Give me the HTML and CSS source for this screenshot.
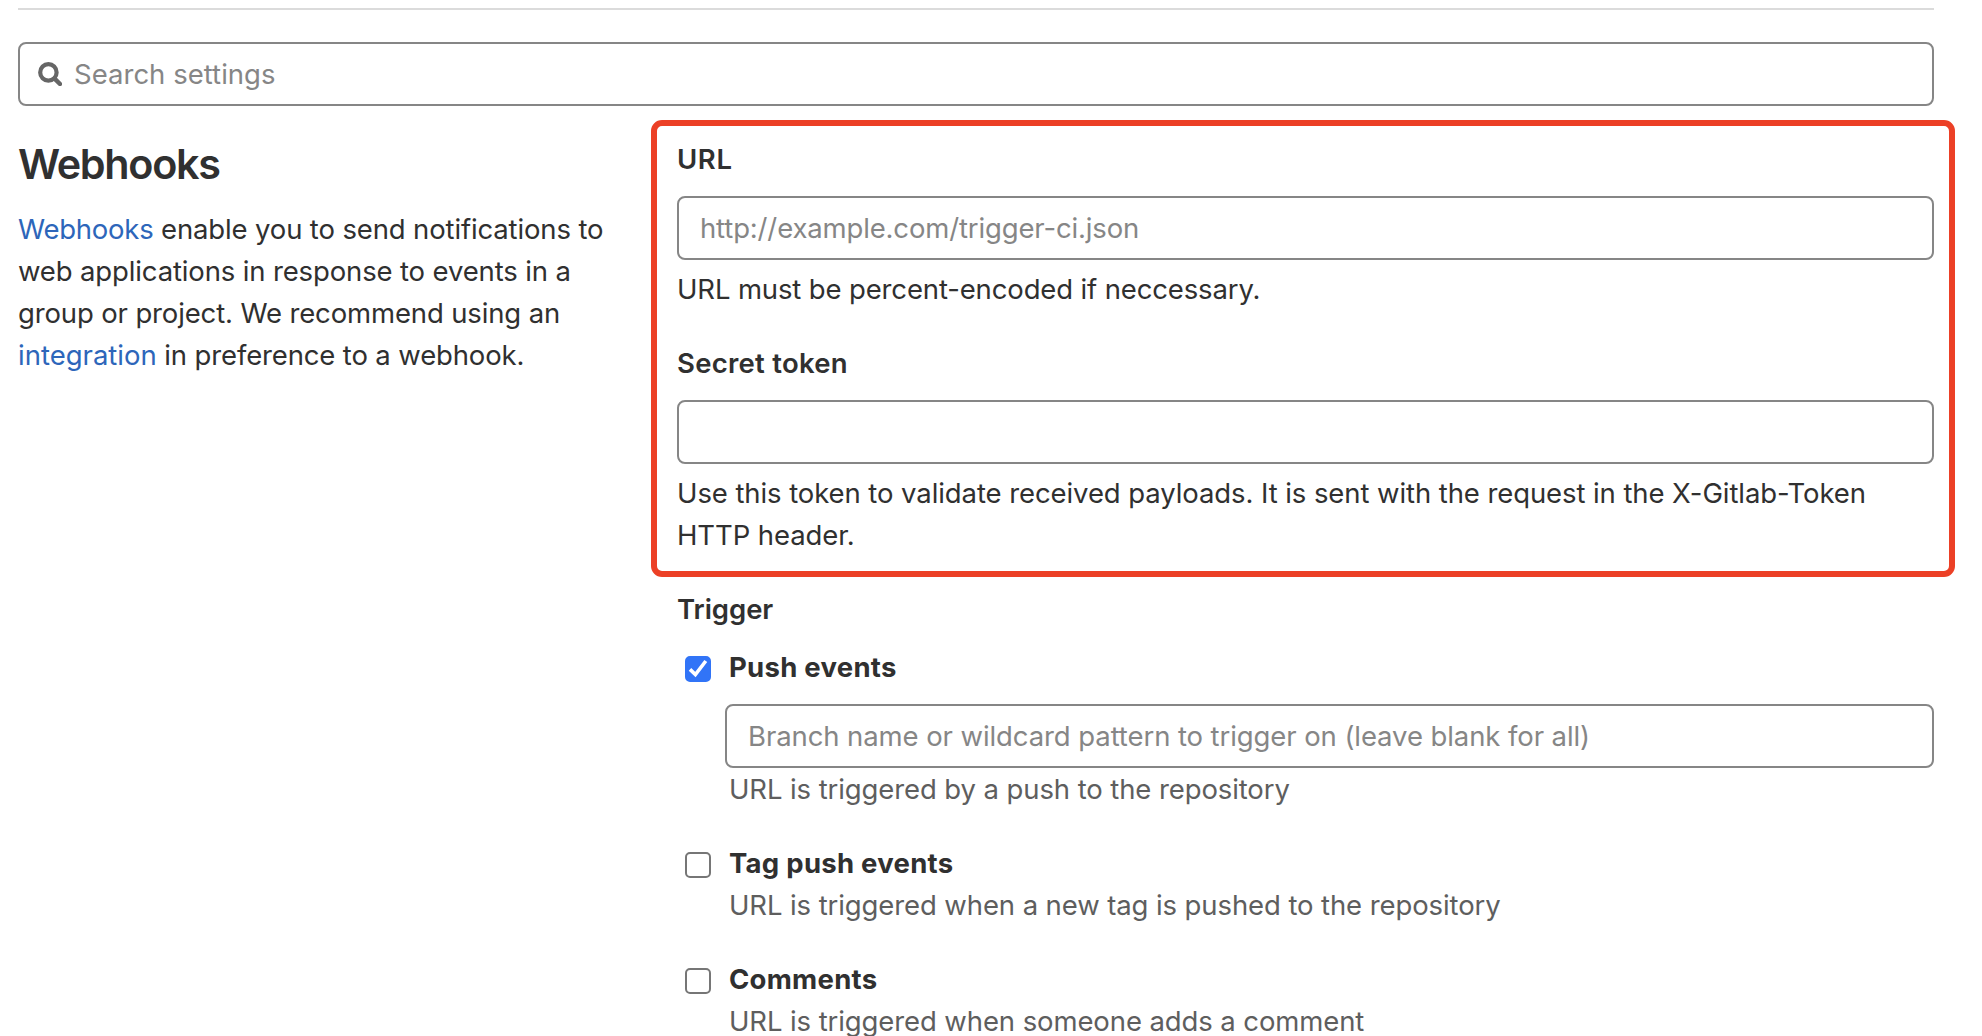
FILE: index.html
```html
<!DOCTYPE html>
<html lang="en">
<head>
<meta charset="utf-8">
<title>Webhooks</title>
<link rel="stylesheet" href="styles.css">
</head>
<body>
<main class="page">
  <hr class="divider">
  <label class="search">
    <svg class="search-icon" viewBox="0 0 24 24" width="24" height="24" fill="none" stroke="#666" aria-hidden="true">
      <circle cx="10.4" cy="10.4" r="8.2" stroke-width="4.2"/>
      <path d="M16.6 16.6 22 22" stroke-width="4.4" stroke-linecap="round"/>
    </svg>
    <input class="search-input" type="text" placeholder="Search settings">
  </label>
  <div class="columns">
    <section class="intro">
      <h4 class="title">Webhooks</h4>
      <p class="lead"><a class="link" href="#">Webhooks</a> enable you to send notifications to web applications in response to events in a group or project. We recommend using an <a class="link link-wide" href="#">integration</a> in preference to a webhook.</p>
    </section>
    <form class="form">
      <div class="highlight">
        <div class="group">
          <label class="label label-url" for="url">URL</label>
          <input class="input input-url" id="url" type="text" placeholder="http://example.com/trigger-ci.json">
          <p class="help">URL must be percent-encoded if neccessary.</p>
        </div>
        <div class="group">
          <label class="label" for="token">Secret token</label>
          <input class="input" id="token" type="text">
          <p class="help help-token">Use this token to validate received payloads. It is sent with the request in the X-Gitlab-Token HTTP header.</p>
        </div>
      </div>
      <div class="group">
        <span class="label label-trigger">Trigger</span>
        <ul class="events">
          <li class="event">
            <input class="check" id="push" type="checkbox" checked>
            <svg class="tick" viewBox="0 0 26 26" width="26" height="26" fill="none" stroke="#fff" stroke-width="3.6" aria-hidden="true"><path d="M5 13.4 10.4 18.6 20.8 5"/></svg>
            <div class="event-body">
              <label class="event-name" for="push">Push events</label>
              <input class="input input-branch" type="text" placeholder="Branch name or wildcard pattern to trigger on (leave blank for all)">
              <p class="event-text">URL is triggered by a push to the repository</p>
            </div>
          </li>
          <li class="event">
            <input class="check" id="tag" type="checkbox">
            <div class="event-body">
              <label class="event-name" for="tag">Tag push events</label>
              <p class="event-text">URL is triggered when a new tag is pushed to the repository</p>
            </div>
          </li>
          <li class="event">
            <input class="check" id="comments" type="checkbox">
            <div class="event-body">
              <label class="event-name" for="comments">Comments</label>
              <p class="event-text">URL is triggered when someone adds a comment</p>
            </div>
          </li>
        </ul>
      </div>
    </form>
  </div>
</main>
</body>
</html>
```
FILE: styles.css
```css
* { box-sizing: border-box; margin: 0; padding: 0; }

body {
  height: 1036px;
  overflow: hidden;
  background: #fff;
  color: #303030;
  font: 400 27.5px/42px Inter, "Liberation Sans", sans-serif;
  letter-spacing: -0.14px;
}

.page { width: 1934px; padding: 8px 0 0 18px; }

.divider { height: 2px; border: 0; background: #dbdbdb; }

.search {
  display: flex;
  align-items: center;
  gap: 12px;
  height: 64px;
  margin-top: 32px;
  padding-left: 18px;
  border: 2px solid #868686;
  border-radius: 8px;
}

.search-icon { flex: none; }

.search-input {
  flex: 1;
  height: 42px;
  border: 0;
  outline: 0;
  background: none;
  color: inherit;
  font: inherit;
  letter-spacing: 0.026px;
}

input::placeholder { color: #868686; opacity: 1; }

.columns { display: grid; grid-template-columns: 619px 1257px; column-gap: 40px; }

.intro { padding-top: 31px; }

.title {
  font-size: 41.3px;
  font-weight: 600;
  line-height: 54px;
  letter-spacing: -1.3px;
}

.lead { margin-top: 17px; }

.link { color: #2d66ba; text-decoration: none; letter-spacing: -0.25px; }
.link-wide { letter-spacing: 0; }

.form { padding-top: 32px; }

.highlight { position: relative; }

/* red annotation frame around the URL and token fields */
.highlight::before {
  content: "";
  position: absolute;
  inset: -18px -21px -21px -26.5px;
  border: 6px solid #ec4026;
  border-radius: 11px;
  pointer-events: none;
}

.group { margin-bottom: 32px; }

.label { display: block; font-weight: 600; letter-spacing: 0.27px; }
.label-url { letter-spacing: 0.6px; }
.label-trigger { letter-spacing: -0.05px; }

.input {
  display: block;
  width: 100%;
  height: 64px;
  margin-top: 16px;
  padding: 0 21px;
  border: 2px solid #868686;
  border-radius: 8px;
  outline: 0;
  background: #fff;
  color: inherit;
  font: inherit;
}

.input-url { letter-spacing: -0.147px; }

.help { margin-top: 8px; margin-right: -4px; }
.help-token { letter-spacing: -0.085px; }

.events { margin-top: 16px; list-style: none; }

.event {
  position: relative;
  display: flex;
  gap: 17px;
  margin-bottom: 32px;
  padding-left: 8px;
}

.check {
  appearance: none;
  flex: none;
  width: 26px;
  height: 26px;
  margin-top: 10px;
  border: 2px solid #767676;
  border-radius: 5px;
  background: #fff;
}

.check:checked { border-color: #3174f7; background: #3174f7; }

.tick { position: absolute; top: 10px; left: 8px; }

.event-body { flex: 1; }

.event-name { display: block; padding-left: 1px; font-weight: 700; letter-spacing: 0.27px; }

.input-branch {
  width: auto;
  min-width: calc(100% + 3px);
  margin-left: -3px;
  letter-spacing: -0.09px;
}

.event-text { padding-left: 1px; color: #5e5e5e; letter-spacing: -0.1px; }
```
